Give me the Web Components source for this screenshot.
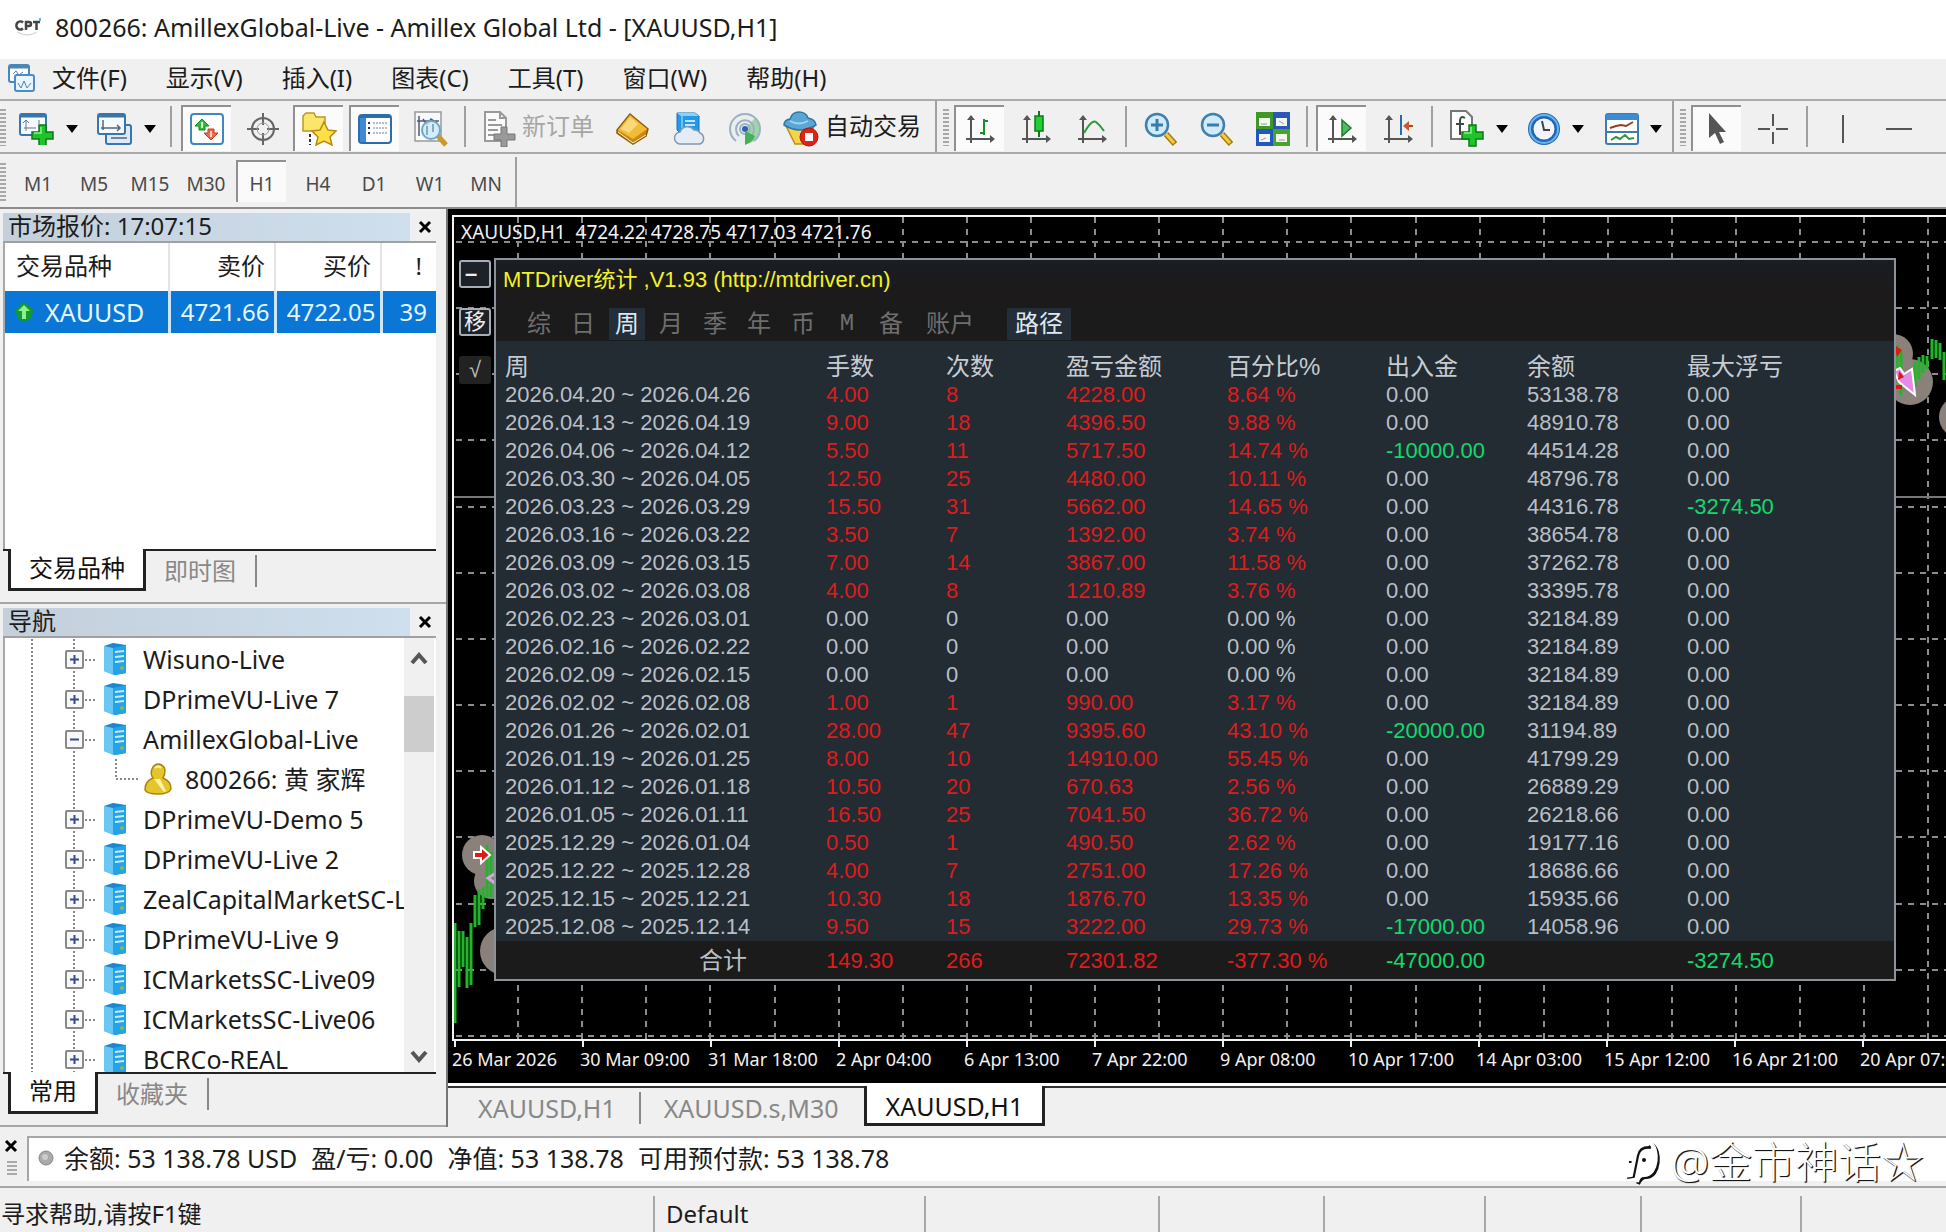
<!DOCTYPE html>
<html lang="zh-CN">
<head>
<meta charset="utf-8">
<title>800266: AmillexGlobal-Live</title>
<style>
html,body{margin:0;height:100%;overflow:hidden;background:#f0f0f0}
body{font:24px/32px "Noto Sans","Noto Sans CJK SC",sans-serif;color:#1c1c1c}
</style>
</head>
<body>
<trade-terminal></trade-terminal>
<script>
const BASE = `<style>
*{box-sizing:border-box}
button{font:inherit;color:inherit;background:none;border:0;padding:0;margin:0;white-space:nowrap}
ul{list-style:none;margin:0;padding:0}
table{border-collapse:collapse;table-layout:fixed;border-spacing:0}
th,td{padding:0;font-weight:400;text-align:left;white-space:nowrap}
</style>`;
class Base extends HTMLElement {
  constructor(){ super(); this.attachShadow({mode:'open'}); }
  connectedCallback(){ if(!this.shadowRoot.childNodes.length) this.shadowRoot.innerHTML = BASE + this.view(); }
}

const axes = '<path d="M7 3v27M2 26h27" stroke="#555" stroke-width="2" fill="none"/><path d="M3 7l4-5 4 5zM26 22l5 4-5 4z" fill="#555"/>';
const plus = '<path d="M20 12h7v7h7v7h-7v7h-7v-7h-7v-7h7z" fill="#1fc42c" stroke="#0b7a16" stroke-width="1.5"/><path d="M22 14v6h-7" stroke="#8ff08f" stroke-width="1.5" fill="none"/>';
const ICONS = {
  cpt:[28,20,'<path d="M2 15q11 6 20 0" stroke="#ccc" fill="none"/><path d="M8 5.500a4 4 0 1 0 0 6M11 13V5h3a2 2 0 0 1 0 4h-3M18 5h7M21.500 5v8" stroke="#444" stroke-width="2.500" fill="none"/><path d="M25 1v3" stroke="#5bd" stroke-width="2"/>'],
  windows:[30,30,'<rect x="3" y="2" width="20" height="17" rx="2" fill="#fff" stroke="#4a86b8" stroke-width="2"/><path d="M3 4h20" stroke="#4a86b8" stroke-width="3"/><path d="M7 11l3-3 3 4 4-3" stroke="#4a86b8" fill="none"/><rect x="9" y="12" width="19" height="16" rx="2" fill="#eaf4fd" stroke="#4a8cc8" stroke-width="2"/><path d="M12 20l3 5 3-7 3 7 4-5" stroke="#4a86b8" fill="none"/>'],
  newchart:[36,32,'<rect x="1" y="1" width="26" height="21" rx="2" fill="#f4faff" stroke="#3a76ae" stroke-width="2"/><path d="M1 3h26" stroke="#3a76ae" stroke-width="3"/><path d="M7 7v11M4 10l3-3 3 3M5 15h12M20 7v4" stroke="#678" fill="none"/>'+plus],
  profiles:[36,32,'<rect x="9" y="12" width="25" height="19" rx="2" fill="#dcebf7" stroke="#3a76ae" stroke-width="2"/><rect x="1" y="1" width="27" height="20" rx="2" fill="#f4faff" stroke="#3a76ae" stroke-width="2"/><path d="M1 3h27" stroke="#3a76ae" stroke-width="3"/><path d="M6 7v10M4 15h18M20 12l3 3-3 3M14 25h16" stroke="#567" fill="none" stroke-width="1.500"/>'],
  market:[34,32,'<rect x="1" y="1" width="32" height="30" rx="3" fill="#fff" stroke="#4088bb" stroke-width="2"/><path d="M12 6l7 7h-4v4H9v-4H5z" fill="#2fbf3a" stroke="#0b8a1c"/><path d="M12 9v6" stroke="#dff5df" stroke-width="2"/><path d="M21 27l-7-7h4v-4h6v4h4z" fill="#f2694a" stroke="#c73a20"/><path d="M21 18v6" stroke="#fbd5ca" stroke-width="2"/>'],
  target:[34,34,'<circle cx="17" cy="17" r="11" fill="none" stroke="#666" stroke-width="2"/><path d="M17 1v12M17 21v12M1 17h12M21 17h12" stroke="#666" stroke-width="2"/><circle cx="17" cy="17" r="6" fill="none" stroke="#999"/>'],
  star:[36,34,'<path d="M2 4l3-3h8l2 4h9v14H2z" fill="#fbe66a" stroke="#b8982a" stroke-width="1.500"/><path d="M9 22v11" stroke="#333" stroke-width="2" stroke-dasharray="3 2"/><path d="M23 10l4 8 8 1-6 6 2 8-8-4-8 4 2-8-6-6 8-1z" fill="#fde047" stroke="#b78b12" stroke-width="1.500"/>'],
  nav:[34,30,'<rect x="1" y="1" width="32" height="28" rx="3" fill="#fff" stroke="#2d6cab" stroke-width="2"/><path d="M1 3h32" stroke="#2d6cab" stroke-width="2"/><path d="M5 4v24" stroke="#3d8bd4" stroke-width="6"/><path d="M10 9h2M10 14h2M10 19h2" stroke="#235" stroke-width="2"/><path d="M15 9h15M15 14h15M15 19h15" stroke="#9ab" stroke-width="1.500" stroke-dasharray="2 1"/>'],
  tester:[34,36,'<rect x="1" y="1" width="26" height="29" fill="#f6fafc" stroke="#999" stroke-width="1.500"/><path d="M5 5v20M9 8l4 6 4-6 6 4M3 10h22" stroke="#557" fill="none" stroke-width="1.500"/><path d="M24 25l8 9" stroke="#c99a2a" stroke-width="5"/><circle cx="17" cy="19" r="9" fill="#cdeaf8" fill-opacity=".85" stroke="#6fa6c9" stroke-width="2"/><path d="M13 15v9M19 13v8" stroke="#8ab" stroke-width="2"/>'],
  order:[34,36,'<path d="M2 1h15l6 6v23H2z" fill="#fafafa" stroke="#999" stroke-width="2"/><path d="M17 1v6h6M5 9h8M5 14h14M5 19h10M5 24h8" stroke="#999" fill="none" stroke-width="2"/><path d="M18 16h6v7h8v6h-8v7h-6v-7h-7v-6h7z" fill="#999" stroke="#777"/>'],
  book:[34,32,'<path d="M14 1l18 15-2 7-13 8L1 20v-3z" fill="#c98a12" stroke="#8c5a0a" stroke-width="1.500"/><path d="M14 2l17 14-14 10L2 17z" fill="#f2bb38"/><path d="M14 4l8 7-9 9-8-4z" fill="#fbd978"/><path d="M2 19l15 11 13-8" stroke="#fff0b8" fill="none"/>'],
  cloud:[34,34,'<path d="M5 1h18l4 3v18H9L5 18z" fill="#2698e8" stroke="#1673b8"/><path d="M5 1h18l4 3H9z" fill="#8fd0f8"/><path d="M10 4v16" stroke="#bfe6ff"/><path d="M13 9h10M13 13h10" stroke="#bfe6ff" stroke-width="2"/><path d="M9 32a6 6 0 0 1-1-12 8 8 0 0 1 14-2 6 6 0 0 1 6 3 6 6 0 0 1 0 11z" fill="#e4ecf5" stroke="#8397b0" stroke-width="1.500"/>'],
  signal:[34,34,'<circle cx="17" cy="17" r="15" fill="#e9efec"/><path d="M17 17V32a15 15 0 0 0 15-15 15 15 0 0 0-5-11z" fill="#9fd6a3"/><g fill="none" stroke="#9fb0c4" stroke-width="2"><path d="M8 29a15 15 0 1 1 18 0"/><path d="M11 24a9 9 0 1 1 12 0"/><circle cx="17" cy="17" r="5"/></g><circle cx="17" cy="17" r="3" fill="#2d63b5"/><path d="M17 19v14q8-3 10-9" fill="#45b055"/>'],
  auto:[36,36,'<path d="M3 15h28l-7 18H12z" fill="#f7d34a" stroke="#b98f1c" stroke-width="1.500"/><path d="M1 14q0-5 6-6 2-7 9-7t9 6q7 1 8 7-8 5-16 5T1 14z" fill="#5aa7d6" stroke="#2f76a8" stroke-width="1.500"/><path d="M7 10q9 5 18 0" stroke="#9fd4f2" stroke-width="2" fill="none"/><circle cx="26" cy="26" r="9" fill="#dc2418" stroke="#a8140c"/><rect x="22" y="22" width="8" height="8" fill="#fff"/>'],
  bar:[32,32,axes+'<path d="M20 6v16M20 8h4M16 20h4" stroke="#18902a" stroke-width="2" fill="none"/>'],
  candle:[32,36,'<g transform="translate(0 2)">'+axes+'</g><path d="M19 0v26" stroke="#0a7a1a" stroke-width="2"/><rect x="15" y="5" width="8" height="15" fill="#1fcf34" stroke="#0a7a1a" stroke-width="1.500"/>'],
  line:[32,32,axes+'<path d="M8 20q8-14 12-11t8 9" stroke="#2a9a3a" stroke-width="2" fill="none"/>'],
  zin:[34,34,'<path d="M22 22l9 10" stroke="#a87a14" stroke-width="6"/><path d="M22 22l8 9" stroke="#f4cc3c" stroke-width="3"/><circle cx="13" cy="13" r="11" fill="#cfeafa" stroke="#3f7fae" stroke-width="2.500"/><path d="M7 13h12M13 7v12" stroke="#3a7ca5" stroke-width="3"/>'],
  zout:[34,34,'<path d="M22 22l9 10" stroke="#a87a14" stroke-width="6"/><path d="M22 22l8 9" stroke="#f4cc3c" stroke-width="3"/><circle cx="13" cy="13" r="11" fill="#cfeafa" stroke="#3f7fae" stroke-width="2.500"/><path d="M7 13h12" stroke="#3a7ca5" stroke-width="3"/>'],
  tile:[34,34,'<path d="M0 0h17v17H0z" fill="#3f9a24"/><path d="M17 0h17v17H17z" fill="#2b57b8"/><path d="M0 17h17v17H0z" fill="#2456bf"/><path d="M17 17h17v17H17z" fill="#45a52a"/><path d="M3 6h11v8H3zM20 6h11v8H20zM3 22h11v8H3zM20 22h11v8H20z" fill="#f2f8ee"/><path d="M5 12h6M23 9l5 3M5 28l5-2M23 28h6" stroke="#99b" />'],
  scroll:[32,32,axes+'<path d="M16 7l9 8-9 8z" fill="#54b865" stroke="#18802c" stroke-width="1.500"/>'],
  shift:[32,32,axes+'<path d="M19 2v20" stroke="#2a6ca8" stroke-width="2"/><path d="M31 13H24" stroke="#b8421a" stroke-width="2"/><path d="M21 13l6-5v10z" fill="#d3562a"/>'],
  indic:[36,38,'<path d="M2 1h15l6 6v22H2z" fill="#fff" stroke="#777" stroke-width="2"/><path d="M16 8q-5-3-5 3v14M7 14h8" stroke="#444" stroke-width="2" fill="none"/><g transform="translate(0 3)">'+plus+'</g>'],
  clock:[34,34,'<circle cx="17" cy="17" r="16" fill="#1f68b8"/><circle cx="17" cy="17" r="14" fill="none" stroke="#6db4ec" stroke-width="2"/><circle cx="17" cy="17" r="10.500" fill="#f2f6fa"/><path d="M15 9l2 9h6" stroke="#444" stroke-width="2" fill="none"/>'],
  templ:[34,32,'<rect x="1" y="1" width="32" height="30" rx="2" fill="#fff" stroke="#3d7cab" stroke-width="2"/><path d="M1 4h32" stroke="#3d8bd0" stroke-width="6"/><path d="M2 19h30" stroke="#3d7cab" stroke-width="2"/><path d="M5 15l6-2 5-1 5 1 7-4" stroke="#93401a" stroke-width="2" fill="none"/><path d="M6 27l5-3 4 2 5-4 4 4 5-1" stroke="#2e9440" stroke-width="2" fill="none"/>'],
  cursor:[20,34,'<path d="M2 1v25l6-5 5 11 4-2-5-10h7z" fill="#555"/>'],
  cross:[32,32,'<path d="M16 1v12M16 19v12M1 16h12M19 16h12" stroke="#555" stroke-width="2"/>'],
  vline:[4,28,'<path d="M2 0v28" stroke="#555" stroke-width="2"/>'],
  hline:[26,4,'<path d="M0 2h26" stroke="#555" stroke-width="2"/>'],
  caret:[14,8,'<path d="M1 0h12L7 8z" fill="#000"/>'],
  close:[14,14,'<path d="M2 2l10 10M12 2L2 12" stroke="#000" stroke-width="3"/>'],
  up:[20,20,'<path d="M10 0l10 9-3 3v4l-7 4-7-4v-4L0 9z" fill="#139a2e"/><path d="M10 3l6 6h-4v8H8V9H4z" fill="#8cf08c"/>'],
  server:[24,34,'<path d="M1 4l9-3 13 2v28l-11 2L1 29z" fill="#1787d2"/><path d="M1 4l9 2v27L1 29z" fill="#6cc6f2"/><path d="M10 6l13-3v28l-11 2-2-1z" fill="#24a3ea"/><path d="M12 10l9-1M12 15l9-1M12 20l9-1" stroke="#c8ecff" stroke-width="2"/><circle cx="19" cy="26" r="2" fill="#8db84a"/>'],
  person:[28,32,'<path d="M1 27q0-9 8-12-3-4-1-9 2-5 7-5 5 1 6 6 0 5-2 8 8 3 8 11-2 5-13 5T1 27z" fill="#e6c52c" stroke="#a8860e" stroke-width="1.500"/><path d="M10 16l10 13 2-1-6-12z" fill="#fff3a8"/><path d="M11 5q3-3 6 0" stroke="#fff3a8" stroke-width="2" fill="none"/>'],
  chup:[18,14,'<path d="M2 11l7-8 7 8" stroke="#555" stroke-width="4" fill="none"/>'],
  chdown:[18,14,'<path d="M2 3l7 8 7-8" stroke="#555" stroke-width="4" fill="none"/>'],
  dot:[18,18,'<circle cx="9" cy="9" r="7" fill="#aaa" stroke="#888"/><circle cx="8" cy="8" r="3" fill="#ccc"/>'],
  note:[42,50,'<g fill="none"><path d="M6 40l6-1 4-20q2-11 14-9M8 24h8M31 8c9 5 8 32-6 32-4 0-6 2-8 7" stroke="#111" stroke-width="4"/><path d="M3 39l7-1 4-20q2-11 14-11M6 22h8M29 6c9 5 8 32-6 32-4 0-6 2-7 7" stroke="#fff" stroke-width="4"/><circle cx="23" cy="23" r="2" fill="#111"/></g>']
};
class UiIcon extends Base {
  view(){ const [w,h,p]=ICONS[this.getAttribute('name')];
    return `<style>:host{display:inline-flex;flex:none}svg{display:block}</style><svg width="${w}" height="${h}" viewBox="0 0 ${w} ${h}" aria-hidden="true">${p}</svg>`; }
}
customElements.define('ui-icon',UiIcon);

class TitleBar extends Base { view(){ return `<style>
:host{display:flex;align-items:center;height:59px;padding:0 0 6px 15px;background:#fff;gap:12px;white-space:nowrap;font-size:25px}</style>
<ui-icon name="cpt"></ui-icon><slot></slot>`; } }
customElements.define('title-bar',TitleBar);

class MenuBar extends Base { view(){ return `<style>
:host{display:block;height:42px;border-bottom:2px solid #ababab}
nav{display:flex;align-items:center;height:38px;padding-left:6px}
ui-icon{margin-right:16px}.m{display:flex;gap:39px}</style>
<nav><ui-icon name="windows"></ui-icon><div class="m">${['文件(F)','显示(V)','插入(I)','图表(C)','工具(T)','窗口(W)','帮助(H)'].map(t=>`<button>${t}</button>`).join('')}</div></nav>`; } }
customElements.define('menu-bar',MenuBar);

class ToolButton extends Base { view(){ return `<style>
:host{display:block;flex:none;width:56px;height:100%}
button{display:flex;align-items:center;justify-content:center;width:50px;height:46px;margin:4px 3px 0;border-top:2px solid transparent;border-left:2px solid transparent}
:host([pressed]) button{background:#fbfbfb;border-color:#909090}
:host([drop]){width:78px}:host([drop]) button{width:72px;justify-content:flex-start;padding-left:6px;gap:10px}
:host([drop]) ui-icon:last-of-type{margin-left:auto;margin-right:7px}
:host([wide]){width:auto}:host([wide]) button{width:auto;padding:0 7px 0 6px;gap:5px}
:host([wide=auto]) button{padding:0 11px 0 6px;gap:6px}
:host([disabled]) button{color:#a6a6a6}
slot{display:block}.t{line-height:30px;padding-bottom:7px}
</style><button ${this.hasAttribute('disabled')?'disabled':''} aria-label="${this.getAttribute('icon')}"><ui-icon name="${this.getAttribute('icon')}"></ui-icon>${this.hasAttribute('wide')?'<span class="t"><slot></slot></span>':''}${this.hasAttribute('drop')?'<ui-icon name="caret"></ui-icon>':''}</button>`; } }
customElements.define('tool-button',ToolButton);

class ToolBar extends Base { view(){
  const b=(i,a='',t='')=>`<tool-button icon="${i}" ${a}>${t}</tool-button>`, s='<i class="sep"></i>', n='<i class="sep near"></i>';
  return `<style>
:host{display:flex;height:53px;border-bottom:2px solid #a9a9a9;overflow:hidden}
.sep{flex:none;width:2px;margin:5px 6px;background:#a0a0a0}.near{margin-right:5px}
.grip{flex:none;width:6px;margin:8px 2px 6px 0;background:repeating-linear-gradient(#a8a8a8 0 2px,#f0f0f0 2px 4px)}
.end{flex:none;width:2px;background:#a0a0a0;margin-right:6px}
</style><i class="grip"></i>${b('newchart','drop')}${b('profiles','drop')}${s}${b('market','pressed')}${b('target')}${b('star','pressed')}${b('nav','pressed')}${b('tester')}${s}
${b('order','wide disabled','新订单')}${b('book')}${b('cloud')}${b('signal')}${b('auto','wide=auto','自动交易')}<i class="end"></i><i class="grip"></i>
${b('bar','pressed')}${b('candle')}${b('line')}${n}${b('zin')}${b('zout')}${b('tile')}${n}${b('scroll','pressed')}${b('shift')}${n}${b('indic','drop')}${b('clock','drop')}${b('templ','drop')}<i class="end"></i><i class="grip"></i>
${b('cursor','pressed')}${b('cross')}${s}${b('vline')}${b('hline')}`; } }
customElements.define('tool-bar',ToolBar);

class TimeframeBar extends Base { view(){ return `<style>
:host{display:flex;height:55px;border-bottom:2px solid #8c8c8c;font-size:19px}
.grip{flex:none;width:6px;margin:9px 3px 5px 0;background:repeating-linear-gradient(#a8a8a8 0 2px,#f0f0f0 2px 4px)}
button{width:50px;margin:6px 3px 5px;color:#4a4a4a;border:2px solid transparent;border-right:0;border-bottom:0;padding-top:3px}
.on{background:#fafafa;border-color:#909090}
.end{width:2px;background:#a0a0a0;margin:3px 0 0 2px}</style><i class="grip"></i>${['M1','M5','M15','M30','H1','H4','D1','W1','MN'].map(t=>`<button class="${t=='H1'?'on':''}">${t}</button>`).join('')}<i class="end"></i>`; } }
customElements.define('timeframe-bar',TimeframeBar);

class TabStrip extends Base { view(){
  const on=+this.getAttribute('active'), tabs=this.getAttribute('tabs').split('|');
  return `<style>
:host{display:flex;flex:none;border-top:2px solid #222;color:#888}
button{position:relative;flex:none;line-height:32px}
.on{background:#fff;color:#111;border:3px solid #222;border-top:0;height:var(--h,42px);margin-top:-2px;padding:var(--top,0) var(--padon,18px) 2px}
.off{border-right:2px solid #888;padding:0 var(--pad,19px) 0 var(--pad,18px);height:32px;margin-top:4px;line-height:22px}
.edge{width:5px;flex:none}.off.last{border-right-color:transparent}
</style>${this.hasAttribute('edge')?'<i class="edge"></i>':''}${tabs.map((t,i)=>`<button role="tab" class="${i==on?'on':'off'+(i==on-1?' last':'')}">${t}</button>`).join('')}`; } }
customElements.define('tab-strip',TabStrip);

class DockPanel extends Base { view(){ return `<style>
:host{display:flex;flex-direction:column;padding:4px 10px 8px 3px;border-bottom:2px solid #a6a6a6;min-height:0}
header{display:flex;flex:none;height:30px;border-bottom:2px solid #a0a0a0;align-items:center}
h2{flex:1;margin:0;font:inherit;line-height:26px;padding:0 0 2px 5px;background:linear-gradient(90deg,#c3cfdb,#cfdfed);white-space:nowrap}
header button{width:26px;display:flex;justify-content:flex-end;padding-right:4px}
.body{flex:1;min-height:0;background:#fff;border-left:2px solid #a8a8a8;display:flex;overflow:hidden}
tab-strip{height:45px}
</style><header><h2>${this.getAttribute('heading')}</h2><button aria-label="关闭"><ui-icon name="close"></ui-icon></button></header>
<div class="body"><slot></slot></div><tab-strip edge active="0" tabs="${this.getAttribute('tabs')}"></tab-strip>`; } }
customElements.define('dock-panel',DockPanel);

class MarketWatch extends Base { view(){ return `<style>
:host{display:block;flex:1}
table{width:100%}th{height:48px;padding-bottom:2px;border-right:2px solid #e4e4e4}
td{height:42px;background:#0a76d6;color:#e6f6ff;border-right:3px solid #cfe6fa}
.r{text-align:right;padding-right:4px}th.r{padding-right:9px}th:first-child{padding-left:11px}th:last-child{padding-right:14px;border:0}td:last-child{border:0;padding-right:9px}
.s{display:flex;align-items:center;gap:11px;padding-left:9px;font-size:25px}</style>
<table><colgroup><col><col style="width:106px"><col style="width:106px"><col style="width:55px"></colgroup>
<thead><tr><th>交易品种</th><th class="r">卖价</th><th class="r">买价</th><th class="r">!</th></tr></thead>
<tbody><tr><td><span class="s"><ui-icon name="up"></ui-icon>XAUUSD</span></td><td class="r">4721.66</td><td class="r">4722.05</td><td class="r">39</td></tr></tbody></table>`; } }
customElements.define('market-watch',MarketWatch);

class AccountTree extends Base { view(){
  const rows=['Wisuno-Live','DPrimeVU-Live 7','-AmillexGlobal-Live','>800266: 黄 家辉','DPrimeVU-Demo 5','DPrimeVU-Live 2','ZealCapitalMarketSC-L','DPrimeVU-Live 9','ICMarketsSC-Live09','ICMarketsSC-Live06','BCRCo-REAL'];
  const v='<path d="M27 0v40M69 0v40" stroke="#888" stroke-width="2" stroke-dasharray="2 2"/>';
  return `<style>
:host{display:flex;flex:1;min-width:0;font-size:25px}
ul{flex:1;min-width:0;overflow:hidden;padding-top:1px}
li{display:flex;align-items:center;height:40px;white-space:nowrap}
svg{display:block}.n{margin-left:16px}.c{margin-left:13px}button{flex:none}
.bar{width:30px;margin-right:2px;background:#f0f0f0;display:flex;flex-direction:column;align-items:center;padding:14px 0 9px}
.thumb{width:30px;height:56px;background:#cdcdcd;margin:30px 0 auto}
</style><ul>${rows.map(r=>{
  if(r[0]=='>') return `<li><svg width="139" height="40">${v}<path d="M111 0v20h22" stroke="#888" stroke-width="2" stroke-dasharray="2 2" fill="none"/></svg><ui-icon name="person"></ui-icon><span class="c">${r.slice(1)}</span></li>`;
  const m=r[0]=='-'; if(m) r=r.slice(1);
  return `<li><button aria-label="展开"><svg width="98" height="40">${v}<path d="M80 21h12" stroke="#888" stroke-width="2" stroke-dasharray="2 2"/><rect x="61" y="12" width="17" height="17" rx="1" fill="#f8f8f8" stroke="#8a8a8a" stroke-width="2"/><path d="M65 20.500h9${m?'':'M69.500 16v9'}" stroke="#3b4a8a" stroke-width="2"/></svg></button><ui-icon name="server"></ui-icon><span class="n">${r}</span></li>`;}).join('')}</ul>
<div class="bar"><ui-icon name="chup"></ui-icon><div class="thumb"></div><ui-icon name="chdown"></ui-icon></div>`; } }
customElements.define('account-tree',AccountTree);

class StatsPanel extends Base { view(){
  const data=`2026.04.20 ~ 2026.04.26|4.00|8|4228.00|8.64 %|0.00|53138.78|0.00
2026.04.13 ~ 2026.04.19|9.00|18|4396.50|9.88 %|0.00|48910.78|0.00
2026.04.06 ~ 2026.04.12|5.50|11|5717.50|14.74 %|-10000.00|44514.28|0.00
2026.03.30 ~ 2026.04.05|12.50|25|4480.00|10.11 %|0.00|48796.78|0.00
2026.03.23 ~ 2026.03.29|15.50|31|5662.00|14.65 %|0.00|44316.78|-3274.50
2026.03.16 ~ 2026.03.22|3.50|7|1392.00|3.74 %|0.00|38654.78|0.00
2026.03.09 ~ 2026.03.15|7.00|14|3867.00|11.58 %|0.00|37262.78|0.00
2026.03.02 ~ 2026.03.08|4.00|8|1210.89|3.76 %|0.00|33395.78|0.00
2026.02.23 ~ 2026.03.01|0.00|0|0.00|0.00 %|0.00|32184.89|0.00
2026.02.16 ~ 2026.02.22|0.00|0|0.00|0.00 %|0.00|32184.89|0.00
2026.02.09 ~ 2026.02.15|0.00|0|0.00|0.00 %|0.00|32184.89|0.00
2026.02.02 ~ 2026.02.08|1.00|1|990.00|3.17 %|0.00|32184.89|0.00
2026.01.26 ~ 2026.02.01|28.00|47|9395.60|43.10 %|-20000.00|31194.89|0.00
2026.01.19 ~ 2026.01.25|8.00|10|14910.00|55.45 %|0.00|41799.29|0.00
2026.01.12 ~ 2026.01.18|10.50|20|670.63|2.56 %|0.00|26889.29|0.00
2026.01.05 ~ 2026.01.11|16.50|25|7041.50|36.72 %|0.00|26218.66|0.00
2025.12.29 ~ 2026.01.04|0.50|1|490.50|2.62 %|0.00|19177.16|0.00
2025.12.22 ~ 2025.12.28|4.00|7|2751.00|17.26 %|0.00|18686.66|0.00
2025.12.15 ~ 2025.12.21|10.30|18|1876.70|13.35 %|0.00|15935.66|0.00
2025.12.08 ~ 2025.12.14|9.50|15|3222.00|29.73 %|-17000.00|14058.96|0.00`.split('\n').map(r=>r.split('|'));
  const cls=(r,i)=>i>0&&i<5&&parseFloat(r[1])?'red':(i>4&&r[i][0]=='-'?'grn':'');
  const tr=(r)=>`<tr>${r.map((c,i)=>`<td class="${cls(r,i)}">${c}</td>`).join('')}</tr>`;
  return `<style>
:host{display:block;border:2px solid #8b9299;background:#232b33;color:#b9bfc6;font:22px/28px "Liberation Sans","Noto Sans CJK SC",sans-serif}
.head{background:linear-gradient(#1a1d24,#1c1a1b 30px,#1b1b1b);height:81px}
h1{margin:0;font:inherit;color:#f2f224;line-height:40px;height:48px;padding-left:7px;white-space:nowrap}
nav{display:flex;font-size:24px;padding-left:21px;color:#6e6e6e}
nav button{width:44px;height:32px;line-height:32px;padding:0 4px}
nav button.on{background:#232e38;color:#dfe8f0;width:36px;margin:0 4px}
nav button.w{width:auto;margin:0 29px 0 9px}nav button.on.w{padding:0 8px;margin:0}
.lat{font-family:"Liberation Mono",monospace;font-size:24px}
table{width:100%}
col:nth-child(1){width:330px}col:nth-child(2){width:120px}col:nth-child(3){width:120px}col:nth-child(4){width:161px}col:nth-child(5){width:159px}col:nth-child(6){width:141px}col:nth-child(7){width:160px}
th{height:40px;padding-top:12px;font-size:24px;color:#c6ccd2}
td{height:28px}th:first-child,td:first-child{padding-left:9px}
.red{color:#dd1c1c}.grn{color:#12d96c}
tfoot td{height:38px;padding-top:1px;background:#1b1b1b}tfoot td:first-child{text-align:right;padding-right:79px;font-size:24px}
</style><div class="head"><h1>MTDriver统计 ,V1.93 (http://mtdriver.cn)</h1>
<nav>${['综','日','周','月','季','年','币','M','备'].map(t=>`<button class="${t=='周'?'on':t=='M'?'lat':''}">${t}</button>`).join('')}<button class="w">账户</button><button class="on w">路径</button></nav></div>
<table><colgroup>${'<col>'.repeat(8)}</colgroup><thead><tr>${['周','手数','次数','盈亏金额','百分比%','出入金','余额','最大浮亏'].map(t=>`<th>${t}</th>`).join('')}</tr></thead>
<tbody>${data.map(tr).join('')}</tbody><tfoot>${tr(['合计','149.30','266','72301.82','-377.30 %','-47000.00','','-3274.50'])}</tfoot></table>`; } }
customElements.define('stats-panel',StatsPanel);

class PriceChart extends Base { view(){
  let g='';
  for(let k=1;k<40;k++){const x=Math.round(k*641/10);g+=`M${x} 0V823`;}
  for(let k=0;k<13;k++){const y=25+Math.round(k*6615/100);g+=`M2 ${y}H3000`;}
  const sticks=(a,w)=>`<path d="${a.map(([x,t,b])=>`M${x} ${t}V${b}`).join('')}" stroke="#22b52a" stroke-width="${w}"/>`;
  const left=sticks([[1,706,806],[5,714,770],[9,714,750],[13,720,771],[17,706,768],[21,678,710],[25,672,708],[29,670,692],[33,628,680],[37,635,680]],3);
  const right=sticks([[1443,128,160],[1447,134,178],[1461,144,170],[1465,140,162],[1469,138,156],[1473,139,152],[1478,122,142],[1482,123,141],[1486,126,143],[1490,135,163]],3);
  return `<style>
:host{display:flex;flex-direction:column;background:#000;padding:6px 0 0 4px;color:#f2f2f2;font-size:18px;line-height:24px;min-width:0;overflow:hidden}
.plot{position:relative;flex:1;border:2px solid #f4f4f4;border-right:0;min-height:0;overflow:hidden}
.plot>svg{position:absolute;inset:0;width:100%;height:100%}
.over{position:relative;padding:3px 50px 0 5px}
.ohlc{padding-left:2px;white-space:pre;height:38px;font-size:19px}
.row{display:flex;gap:3px;align-items:flex-start}
.side{display:flex;flex-direction:column;gap:20px;padding-top:2px;width:32px}
.side button{height:28px;border:2px solid #a9aeb5;border-radius:3px;background:#1d2128;color:#eee;font-size:22px;line-height:24px;font-family:"Liberation Sans","Noto Sans CJK SC",sans-serif}
.side .dark{border-color:#222;background:#222;color:#bbb}
.side .m{text-align:left;padding-left:4px;font-weight:700}
stats-panel{flex:1;min-width:0}
.axis{display:flex;height:42px;white-space:nowrap;overflow:hidden}
.axis span{flex:none;width:128px}
.axis span::before{content:"";display:block;width:2px;height:6px;background:#eee;margin-left:2px}
</style><div class="plot"><svg aria-hidden="true"><path d="${g}" stroke="#8c8c8c" stroke-width="2" stroke-dasharray="6 6"/><path d="M0 280H3000" stroke="#777" stroke-width="2"/>
<g fill="#8a817a"><circle cx="28" cy="638" r="20"/><circle cx="38" cy="664" r="18"/><circle cx="50" cy="734" r="24"/><circle cx="1439" cy="137" r="20"/><circle cx="1456" cy="165" r="23"/><circle cx="1506" cy="200" r="21"/></g>
${left}${right}<path d="M20 635h7v-5l9 8-9 8v-5h-7z" fill="#e01818" stroke="#fff" stroke-width="2"/><path d="M42 656l-8 5 8 6" fill="none" stroke="#dca0e8" stroke-width="3"/>
<path d="M1440 154l6-3 4 6 8-5 3 26-16-13z" fill="#e58ae6" stroke="#fff" stroke-width="2"/><path d="M1440 128l8 5-5 7zM1445 154l5 6-6 3zM1442 168h6v4h-6z" fill="#e01818"/></svg>
<div class="over"><div class="ohlc">XAUUSD,H1  4724.22 4728.75 4717.03 4721.76</div>
<div class="row"><div class="side"><button class="m">–</button><button>移</button><button class="dark">√</button></div><stats-panel></stats-panel></div></div></div>
<div class="axis">${['26 Mar 2026','30 Mar 09:00','31 Mar 18:00','2 Apr 04:00','6 Apr 13:00','7 Apr 22:00','9 Apr 08:00','10 Apr 17:00','14 Apr 03:00','15 Apr 12:00','16 Apr 21:00','20 Apr 07:00'].map(t=>`<span>${t}</span>`).join('')}</div>`; } }
customElements.define('price-chart',PriceChart);

class AccountBar extends Base { view(){ return `<style>
:host{display:flex;height:61px;border-bottom:2px solid #a6a6a6;font-size:25px}
.g{flex:none;width:27px;padding:12px 0 0 4px;display:flex;flex-direction:column;gap:8px}
.g i{width:10px;height:14px;margin-left:3px;background:repeating-linear-gradient(#aaa 0 2px,#f0f0f0 2px 4px)}
.box{flex:1;margin:9px 0 5px;border:2px solid #a6a6a6;border-right:0;border-bottom:0;background:#fff;display:flex;align-items:center;padding:0 0 4px 8px;gap:9px;white-space:nowrap}
.t{display:flex;gap:14px}</style>
<div class="g"><ui-icon name="close"></ui-icon><i></i></div><div class="box"><ui-icon name="dot"></ui-icon><div class="t"><span>余额: 53 138.78 USD</span><span>盈/亏: 0.00</span><span>净值: 53 138.78</span><span>可用预付款: 53 138.78</span></div></div>`; } }
customElements.define('account-bar',AccountBar);

class StatusBar extends Base { view(){ return `<style>
:host{display:flex;height:44px;padding-top:8px;white-space:nowrap}
span{flex:none;border-right:2px solid #a8a8a8;padding:2px 0 0 11px}span:first-of-type{padding-left:1px}
</style>${[[655,'寻求帮助,请按F1键'],[271,'Default'],[234,''],[165,''],[161,''],[156,''],[160,'']].map(([w,t])=>`<span style="width:${w}px">${t}</span>`).join('')}`; } }
customElements.define('status-bar',StatusBar);

class PosterMark extends Base { view(){ return `<style>
:host{position:absolute;right:22px;bottom:40px;display:flex;align-items:center;gap:8px;font-size:43px;line-height:60px;font-weight:300;color:#fff;text-shadow:1px 1px 1px #111,1px 1px 0 #333;white-space:nowrap}
</style><ui-icon name="note"></ui-icon><span>@金市神话☆</span>`; } }
customElements.define('poster-mark',PosterMark);

class TradeTerminal extends Base { view(){ return `<style>
:host{position:relative;display:flex;flex-direction:column;height:100vh;overflow:hidden}
title-bar,menu-bar,tool-bar,timeframe-bar,account-bar,status-bar{flex:none}
main{flex:1;display:flex;min-height:0}
aside{flex:none;width:446px;display:flex;flex-direction:column}
.watch{flex:none;height:395px}.nav{flex:1}
section{flex:1;min-width:0;display:flex;flex-direction:column;border-left:2px solid #777}
price-chart{flex:1;min-height:0}
section>tab-strip{--pad:23px;--padon:19px;--h:40px;--top:4px;font-size:25px;border-top:2px solid #333;height:41px;padding-left:7px}
.gap{height:3px;background:#fff;flex:none}
</style>
<title-bar>800266: AmillexGlobal-Live - Amillex Global Ltd - [XAUUSD,H1]</title-bar><menu-bar></menu-bar><tool-bar></tool-bar><timeframe-bar></timeframe-bar>
<main><aside><dock-panel class="watch" heading="市场报价: 17:07:15" tabs="交易品种|即时图"><market-watch></market-watch></dock-panel>
<dock-panel class="nav" heading="导航" tabs="常用|收藏夹"><account-tree></account-tree></dock-panel></aside>
<section><price-chart></price-chart><div class="gap"></div><tab-strip active="2" tabs="XAUUSD,H1|XAUUSD.s,M30|XAUUSD,H1"></tab-strip></section></main>
<account-bar></account-bar><status-bar></status-bar><poster-mark></poster-mark>`; } }
customElements.define('trade-terminal',TradeTerminal);
</script>
</body>
</html>
